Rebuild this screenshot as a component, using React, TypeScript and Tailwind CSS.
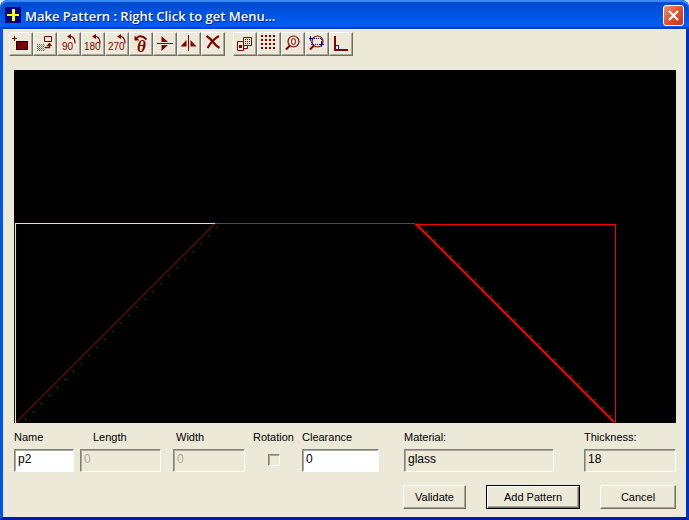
import type { ReactNode } from 'react';

const maroon = '#800000';

type Tool = { label: string; icon: ReactNode };

function TurnArrow({ x }: { x: number }) {
  return (
    <g transform={`translate(${x} 0)`}>
      <path d="M2 4.500h2.500q3.500 1.500 3.500 7" fill="none" stroke={maroon} strokeWidth="1.200" />
      <path d="M0 4.500l4-2.500v5z" fill={maroon} />
    </g>
  );
}

function RotateIcon({ degrees, x, arrow }: { degrees: string; x: number; arrow: number }) {
  return (
    <>
      <text
        x={x}
        y="18"
        fontSize="10"
        fill={maroon}
        className="font-['Liberation_Sans_Narrow','Liberation_Sans',sans-serif]"
      >
        {degrees}
      </text>
      <TurnArrow x={arrow} />
    </>
  );
}

const editTools: Tool[] = [
  {
    label: 'Add sheet',
    icon: (
      <g shapeRendering="crispEdges">
        <path d="M3 6h5v1H3zM5 4h1v5H5z" fill={maroon} />
        <path d="M7 9h12v9H7z" fill="#000" />
        <path d="M8 10h10v7H8z" fill={maroon} />
      </g>
    ),
  },
  {
    label: 'Move',
    icon: (
      <>
        <path d="M11.500 4.500h7v5h-7z" fill="none" stroke={maroon} />
        <path
          d="M4 12.500h8M4 14.500h8M4 16.500h8M4 18.500h8"
          stroke="#606060"
          strokeDasharray="1 1"
          shapeRendering="crispEdges"
        />
        <path
          d="M5 13.500h7M5 15.500h7M5 17.500h7"
          stroke="#909088"
          strokeDasharray="1 1"
          shapeRendering="crispEdges"
        />
        <path d="M12 15.500h4.500v-3" fill="none" stroke={maroon} strokeWidth="1.400" />
        <path d="M13.500 14l3-3.500 2.500 3.500z" fill={maroon} />
      </>
    ),
  },
  { label: 'Rotate 90', icon: <RotateIcon degrees="90" x={5} arrow={10} /> },
  { label: 'Rotate 180', icon: <RotateIcon degrees="180" x={3} arrow={11} /> },
  { label: 'Rotate 270', icon: <RotateIcon degrees="270" x={3} arrow={12} /> },
  {
    label: 'Rotate by angle',
    icon: (
      <>
        <text
          x="8"
          y="20"
          fontSize="17"
          fill={maroon}
          className="font-['Liberation_Serif',serif] font-bold italic"
        >
          θ
        </text>
        <path d="M7.500 6Q12 2 17.500 7.500" fill="none" stroke={maroon} strokeWidth="1.800" />
        <path d="M5.500 3.500V8.500h5z" fill={maroon} />
      </>
    ),
  },
  {
    label: 'Flip vertical',
    icon: (
      <>
        <path d="M4 11h16v1H4z" fill={maroon} shapeRendering="crispEdges" />
        <path d="M8.500 4v6H15zM8.500 13H15l-6.500 6z" fill={maroon} />
      </>
    ),
  },
  {
    label: 'Flip horizontal',
    icon: (
      <>
        <path d="M11 3h1v16h-1z" fill={maroon} shapeRendering="crispEdges" />
        <path d="M3.500 14.500l6-6.500v6.500zM13.500 8l6 6.500h-6z" fill={maroon} />
      </>
    ),
  },
  {
    label: 'Delete',
    icon: (
      <>
        <path d="M5.500 4Q9 6 12 10t6.500 6" fill="none" stroke={maroon} strokeWidth="2.200" />
        <path d="M18 4q-6 3-11.500 12" fill="none" stroke={maroon} strokeWidth="2" />
      </>
    ),
  },
];

const viewTools: Tool[] = [
  {
    label: 'Copy to grid',
    icon: (
      <>
        <path d="M10.500 5.500h8v8h-8z" fill="#ece9d8" stroke={maroon} />
        <path
          d="M12 7.500h6M12 9.500h6M12 11.500h6"
          stroke={maroon}
          strokeDasharray="1 1"
          shapeRendering="crispEdges"
        />
        <path d="M4.500 9.500h6v9h-6z" fill="#ece9d8" stroke={maroon} />
        <path d="M6 13h3v3H6z" fill={maroon} />
        <path d="M11 16.500h3.500V14" fill="none" stroke={maroon} />
      </>
    ),
  },
  {
    label: 'Grid',
    icon: (
      <path
        d="M4 4h15M4 8h15M4 12h15M4 16h15"
        stroke={maroon}
        strokeWidth="2"
        strokeDasharray="2 2"
        shapeRendering="crispEdges"
      />
    ),
  },
  {
    label: 'Zoom to fit',
    icon: (
      <>
        <circle cx="12.500" cy="9.500" r="5.500" fill="none" stroke={maroon} strokeWidth="1.200" />
        <ellipse cx="12.500" cy="9.500" rx="2" ry="3.200" fill="none" stroke={maroon} />
        <path d="M9 13.500l-4 4" stroke={maroon} strokeWidth="2" />
      </>
    ),
  },
  {
    label: 'Zoom window',
    icon: (
      <>
        <circle cx="12.500" cy="9.500" r="5.500" fill="none" stroke={maroon} strokeWidth="1.200" />
        <path d="M9 13.500l-4 4" stroke={maroon} strokeWidth="2" />
        <path
          d="M5.500 4v5M4 6.500h4M16.500 10v5M14 12.500h5"
          stroke="#000080"
          shapeRendering="crispEdges"
        />
        <path
          d="M9 6.500h7.500V10M6 10v2.500h8"
          fill="none"
          stroke="#000080"
          strokeDasharray="1 1"
          shapeRendering="crispEdges"
        />
      </>
    ),
  },
  {
    label: 'Ortho',
    icon: (
      <g shapeRendering="crispEdges">
        <path d="M5 4h2v13h12v2H5z" fill={maroon} />
        <path d="M7 13.500h2.500V17" fill="none" stroke="#0000ff" />
      </g>
    ),
  },
];

function ToolGroup({ tools }: { tools: Tool[] }) {
  return (
    <div className="flex">
      {tools.map((tool) => (
        <button
          key={tool.label}
          type="button"
          aria-label={tool.label}
          className="h-6 w-6 border border-t-white border-l-white border-r-[#716f64] border-b-[#716f64] shadow-[inset_-1px_-1px_0_#aca899]"
        >
          <svg viewBox="1 1 22 22" className="block h-[22px] w-[22px]">
            {tool.icon}
          </svg>
        </button>
      ))}
    </div>
  );
}

function Drawing() {
  return (
    <svg viewBox="0 0 662 353" className="block w-full bg-black" role="img" aria-label="Pattern drawing">
      <path d="M204 157L5 356" stroke="#003800" strokeWidth="2" strokeDasharray="2 9.300" />
      <path d="M201 153.500L1 353.500" stroke="#b81000" />
      <path d="M404 153L604 353" stroke="#003800" strokeWidth="3" strokeDasharray="3 8.300" />
      <path d="M402 154L600 352" stroke="#ff0000" strokeWidth="2" />
      <g fill="none" shapeRendering="crispEdges">
        <path d="M201 153.500h200" stroke="#ff0000" />
        <path d="M401 154.500h200.500V353" stroke="#ff0000" />
        <path d="M1.500 353V153.500H201" stroke="#ffff00" />
      </g>
    </svg>
  );
}

type FieldProps = {
  id: string;
  label: string;
  value: string;
  className: string;
  labelClass?: string;
  tone?: 'edit' | 'disabled' | 'readonly';
  autoFocus?: boolean;
};

const tones = {
  edit: 'bg-white text-black',
  disabled: 'bg-[#ece9d8] text-[#aca899]',
  readonly: 'bg-[#ece9d8] text-black',
};

function Field({ id, label, value, className, labelClass = '', tone = 'edit', autoFocus }: FieldProps) {
  return (
    <div className={`flex flex-col gap-1 ${className}`}>
      <label htmlFor={id} className={labelClass}>
        {label}
      </label>
      <input
        id={id}
        defaultValue={value}
        disabled={tone === 'disabled'}
        readOnly={tone === 'readonly'}
        autoFocus={autoFocus}
        className={`h-[23px] w-full border border-t-[#808078] border-l-[#808078] border-r-white border-b-white px-[3px] pb-1 text-[12px] leading-4 shadow-[inset_1px_1px_0_#aca899] outline-none ${tones[tone]}`}
      />
    </div>
  );
}

const raised =
  'h-6 border border-t-white border-l-white border-r-[#716f64] border-b-[#716f64] shadow-[inset_-1px_-1px_0_#aca899]';

export default function App() {
  return (
    <div className="flex min-h-screen flex-col bg-[#dfe6f5] font-['Liberation_Sans',sans-serif] text-[11px] leading-4 text-black">
      <div className="flex flex-1 flex-col rounded-t-lg border-x-[3px] border-b-[3px] border-l-[#0054e9] border-r-[#0030c8] border-b-[#001ea0] bg-[#0054e3]">
        <header className="-mx-[3px] flex h-[29px] items-center gap-1 rounded-t-lg bg-linear-to-b from-[#0148c8] via-[#0054e3] to-[#0060f8] pr-[5px] pl-[5px] shadow-[inset_0_2px_1px_#3b8cf8,inset_0_-2px_1px_#0040c0]">
          <svg viewBox="0 0 16 16" className="h-4 w-4" shapeRendering="crispEdges" aria-hidden="true">
            <path d="M0 0h16v16H0z" fill="#000080" />
            <path d="M7 2h3v5h4v2h-4v5H7V9H2V7h5z" fill="#ffff00" />
          </svg>
          <h1 className="flex-1 pt-[2px] font-['Open_Sans',sans-serif] text-[13px] leading-4 font-semibold whitespace-nowrap text-white [text-shadow:1px_1px_0_#0a1883]">
            Make Pattern : Right Click to get Menu...
          </h1>
          <button
            type="button"
            aria-label="Close"
            className="mt-[2px] h-[21px] w-[21px] rounded-[3px] border border-white bg-linear-to-br from-[#f09078] via-[#e2502c] to-[#c83010]"
          >
            <svg viewBox="0 0 19 19" className="block h-[19px] w-[19px]">
              <path d="M5 5l9 9M14 5l-9 9" stroke="#fff" strokeWidth="2.200" />
            </svg>
          </button>
        </header>

        <main className="flex-1 bg-[#ece9d8]">
          <div className="flex gap-2 px-[6px] pt-[3px] pb-[14px]">
            <ToolGroup tools={editTools} />
            <ToolGroup tools={viewTools} />
          </div>

          <div className="pr-[10px] pl-[11px]">
            <Drawing />

            <form className="pt-[6px]">
              <div className="flex">
                <Field id="name" label="Name" value="p2" className="w-[60px]" autoFocus />
                <Field
                  id="length"
                  label="Length"
                  value="0"
                  tone="disabled"
                  className="ml-[6px] w-[81px]"
                  labelClass="pl-[13px]"
                />
                <Field
                  id="width"
                  label="Width"
                  value="0"
                  tone="disabled"
                  className="ml-3 w-[72px]"
                  labelClass="pl-[3px]"
                />
                <div className="flex w-[57px] flex-col items-center gap-[9px]">
                  <label htmlFor="rotation">Rotation</label>
                  <input
                    id="rotation"
                    type="checkbox"
                    className="h-3 w-3 appearance-none border border-t-[#808078] border-l-[#808078] border-r-white border-b-white shadow-[inset_1px_1px_0_#aca899]"
                  />
                </div>
                <Field id="clearance" label="Clearance" value="0" className="w-[77px]" />
                <Field
                  id="material"
                  label="Material:"
                  value="glass"
                  tone="readonly"
                  className="ml-[25px] flex-1"
                />
                <Field
                  id="thickness"
                  label="Thickness:"
                  value="18"
                  tone="readonly"
                  className="ml-[30px] w-[92px]"
                />
              </div>

              <div className="flex justify-end gap-5 pt-[13px] pb-2">
                <button type="button" className={`w-[63px] ${raised}`}>
                  Validate
                </button>
                <button
                  type="button"
                  className="h-6 w-[94px] border border-black shadow-[inset_1px_1px_0_#fff,inset_-1px_-1px_0_#716f64,inset_-2px_-2px_0_#aca899]"
                >
                  Add Pattern
                </button>
                <button type="button" className={`w-[76px] ${raised}`}>
                  Cancel
                </button>
              </div>
            </form>
          </div>
        </main>
      </div>
    </div>
  );
}
